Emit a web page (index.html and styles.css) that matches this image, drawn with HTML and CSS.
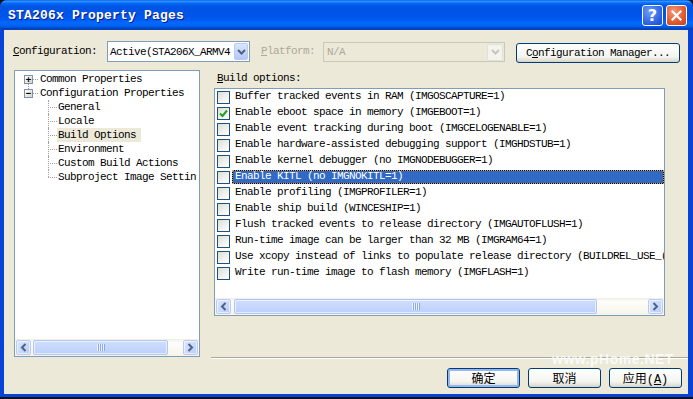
FILE: index.html
```html
<!DOCTYPE html>
<html lang="zh">
<head>
  <meta charset="UTF-8" />
  <title>STA206x Property Pages</title>
  <link rel="stylesheet" href="styles.css">
</head>
<body>
  <div class="window">
    <div class="titlebar">
      <span class="title">STA206x Property Pages</span>
      <div class="caption-btns">
        <span class="cap-btn help">?</span>
        <span class="cap-btn close">
          <svg width="11" height="11" viewBox="0 0 11 11"><path d="M1.5 1.5 L9.5 9.5 M9.5 1.5 L1.5 9.5" stroke="#fff" stroke-width="2.2" stroke-linecap="square"/></svg>
        </span>
      </div>
    </div>

    <div class="client">
      <div class="config-row">
        <span class="cfg-label"><u>C</u>onfiguration:</span>
        <div class="combo">
          <span class="combo-text">Active(STA206X_ARMV4</span>
          <span class="drop">
            <svg width="9" height="6" viewBox="0 0 9 6"><path d="M1 1 L4.5 4.5 L8 1" fill="none" stroke="#4d6185" stroke-width="2"/></svg>
          </span>
        </div>
        <span class="plat-label"><u>P</u>latform:</span>
        <div class="combo combo-off">
          <span class="combo-text">N/A</span>
          <span class="drop">
            <svg width="9" height="6" viewBox="0 0 9 6"><path d="M1 1 L4.5 4.5 L8 1" fill="none" stroke="#c9c7ba" stroke-width="2"/></svg>
          </span>
        </div>
        <button class="btn mgr-btn">C<u>o</u>nfiguration Manager...</button>
      </div>

      <div class="main">
        <div class="tree-panel">
          <div class="tree-body">
            <div class="node top"><span class="exp">+</span><span class="dots"></span><span class="txt">Common Properties</span></div>
            <div class="node top"><span class="exp open">&minus;</span><span class="dots"></span><span class="txt">Configuration Properties</span></div>
            <div class="node child"><span class="hline"></span><span class="txt">General</span></div>
            <div class="node child"><span class="hline"></span><span class="txt">Locale</span></div>
            <div class="node child"><span class="hline"></span><span class="txt sel">Build Options</span></div>
            <div class="node child"><span class="hline"></span><span class="txt">Environment</span></div>
            <div class="node child"><span class="hline"></span><span class="txt">Custom Build Actions</span></div>
            <div class="node child last"><span class="hline"></span><span class="txt">Subproject Image Settin</span></div>
          </div>
          <div class="hscroll">
            <span class="sb-btn"><svg width="7" height="9" viewBox="0 0 7 9"><path d="M5.5 1 L2 4.5 L5.5 8" fill="none" stroke="#4d6185" stroke-width="2"/></svg></span>
            <span class="thumb tree-thumb"><span class="grip"></span></span>
            <span class="sb-btn sb-right"><svg width="7" height="9" viewBox="0 0 7 9"><path d="M1.5 1 L5 4.5 L1.5 8" fill="none" stroke="#4d6185" stroke-width="2"/></svg></span>
          </div>
        </div>

        <div class="options">
          <div class="opt-label"><u>B</u>uild options:</div>
          <div class="listbox">
            <div class="rows">
              <div class="row"><span class="check"></span><span class="item">Buffer tracked events in RAM (IMGOSCAPTURE=1)</span></div>
              <div class="row"><span class="check checked"><svg width="9" height="9" viewBox="0 0 9 9"><path d="M1 4.5 L3.5 7 L8 1.5" fill="none" stroke="#21a121" stroke-width="2"/></svg></span><span class="item">Enable eboot space in memory (IMGEBOOT=1)</span></div>
              <div class="row"><span class="check"></span><span class="item">Enable event tracking during boot (IMGCELOGENABLE=1)</span></div>
              <div class="row"><span class="check"></span><span class="item">Enable hardware-assisted debugging support (IMGHDSTUB=1)</span></div>
              <div class="row"><span class="check"></span><span class="item">Enable kernel debugger (no IMGNODEBUGGER=1)</span></div>
              <div class="row"><span class="check"></span><span class="item selected">Enable KITL (no IMGNOKITL=1)</span></div>
              <div class="row"><span class="check"></span><span class="item">Enable profiling (IMGPROFILER=1)</span></div>
              <div class="row"><span class="check"></span><span class="item">Enable ship build (WINCESHIP=1)</span></div>
              <div class="row"><span class="check"></span><span class="item">Flush tracked events to release directory (IMGAUTOFLUSH=1)</span></div>
              <div class="row"><span class="check"></span><span class="item">Run-time image can be larger than 32 MB (IMGRAM64=1)</span></div>
              <div class="row"><span class="check"></span><span class="item">Use xcopy instead of links to populate release directory (BUILDREL_USE_(</span></div>
              <div class="row"><span class="check"></span><span class="item">Write run-time image to flash memory (IMGFLASH=1)</span></div>
            </div>
            <div class="hscroll">
              <span class="sb-btn"><svg width="7" height="9" viewBox="0 0 7 9"><path d="M5.5 1 L2 4.5 L5.5 8" fill="none" stroke="#4d6185" stroke-width="2"/></svg></span>
              <span class="thumb list-thumb"><span class="grip"></span></span>
              <span class="sb-btn sb-right"><svg width="7" height="9" viewBox="0 0 7 9"><path d="M1.5 1 L5 4.5 L1.5 8" fill="none" stroke="#4d6185" stroke-width="2"/></svg></span>
            </div>
          </div>
        </div>
      </div>

      <div class="separator"></div>

      <div class="footer">
        <button class="btn dlg-btn default">确定</button>
        <button class="btn dlg-btn">取消</button>
        <button class="btn dlg-btn">应用(<u>A</u>)</button>
      </div>

      <div class="watermark">www.pHome.NET</div>
    </div>
  </div>
</body>
</html>
```

FILE: styles.css
```css
* { box-sizing: border-box; }
body {
  margin: 0;
  background: #12121c;
  font-family: "Liberation Mono", monospace;
  font-size: 11px;
  letter-spacing: -0.6px;
  color: #000;
}
u { text-decoration: underline; }

.window {
  width: 693px;
  height: 397px;
  display: flex;
  flex-direction: column;
  background: #0842d6;
  border-radius: 7px 7px 0 0;
  overflow: hidden;
}
.titlebar {
  height: 30px;
  flex: none;
  display: flex;
  align-items: center;
  padding: 0 6px 0 8px;
  background: linear-gradient(to bottom, #0058ee 0%, #3593ff 4%, #288eff 6%, #127dff 8%, #036ffc 10%, #0262ee 14%, #0057e5 20%, #0054e3 24%, #0055eb 56%, #005bf5 66%, #026afe 76%, #0062ef 86%, #0052d6 92%, #0040ab 96%, #0842d6 100%);
}
.title {
  flex: 1;
  color: #fff;
  font-weight: bold;
  font-size: 13px;
  letter-spacing: 0.2px;
  text-shadow: 1px 1px 0 #0a1a8a;
  margin-top: 1px;
}
.caption-btns { display: flex; gap: 3px; }
.cap-btn {
  width: 21px;
  height: 21px;
  border: 1px solid #fff;
  border-radius: 3px;
  display: flex;
  align-items: center;
  justify-content: center;
  color: #fff;
}
.help {
  background: radial-gradient(circle at 35% 30%, #6c9cf8, #2a5ee0 70%, #1b47c4);
  font-family: "DejaVu Sans", sans-serif;
  font-weight: bold;
  font-size: 16px;
  letter-spacing: 0;
}
.close {
  background: radial-gradient(circle at 35% 30%, #f29a78, #e0582e 60%, #c7411a);
}

.client {
  flex: 1;
  margin: 0 5px 3px 4px;
  background: #ece9d8;
  display: flex;
  flex-direction: column;
  position: relative;
  overflow: hidden;
}

/* configuration row */
.config-row {
  display: flex;
  align-items: flex-start;
  height: 21px;
  margin-top: 11px;
  padding-left: 9px;
}
.cfg-label { width: 94px; line-height: 21px; }
.plat-label { width: 62px; margin-left: 11px; line-height: 21px; color: #aca899; }
.combo {
  width: 143px;
  height: 21px;
  border: 1px solid #7f9db9;
  background: #fff;
  display: flex;
  align-items: center;
  overflow: hidden;
}
.combo-text { flex: 1; padding-left: 2px; white-space: nowrap; overflow: hidden; }
.drop {
  flex: none;
  width: 14px;
  height: 17px;
  margin-right: 1px;
  border: 1px solid #b9c9ef;
  border-radius: 2px;
  background: linear-gradient(#dbe6fd, #b4c8f6);
  display: flex;
  align-items: center;
  justify-content: center;
}
.combo-off {
  width: 182px;
  height: 20px;
  margin-top: 1px;
  border-color: #c9c7ba;
  background: #ece9d8;
  color: #aca899;
}
.combo-off .combo-text { padding-left: 3px; }
.combo-off .drop {
  width: 16px;
  height: 17px;
  background: #f4f3ee;
  border-color: #e3e1d6;
}

.btn {
  font-family: "Liberation Mono", monospace;
  font-size: 11px;
  letter-spacing: -0.6px;
  color: #000;
  border: 1px solid #003c74;
  border-radius: 3px;
  background: linear-gradient(#ffffff, #f4f4f0 70%, #e3e0d6 90%, #d6d0c5);
  padding: 0;
  cursor: default;
}
.mgr-btn { width: 164px; height: 20px; margin-left: 11px; margin-top: 2px; }

/* tree + list */
.main {
  display: flex;
  margin-top: 8px;
  padding-left: 10px;
  height: 287px;
}
.tree-panel {
  width: 186px;
  height: 287px;
  border: 1px solid #7f9db9;
  background: #fff;
  display: flex;
  flex-direction: column;
}
.tree-body { flex: 1; padding-top: 1px; overflow: hidden; }
.node {
  position: relative;
  height: 14px;
  line-height: 14px;
  display: flex;
  white-space: nowrap;
}
.node.top { padding-left: 9px; }
.exp {
  position: relative;
  flex: none;
  width: 9px;
  height: 9px;
  margin-top: 3px;
  border: 1px solid #7b92b5;
  background: linear-gradient(135deg, #fff, #d8d4c8);
  font-family: "DejaVu Sans Mono", monospace;
  font-size: 9px;
  line-height: 6px;
  letter-spacing: 0;
  text-align: center;
  font-weight: bold;
}
.exp.open::before {
  content: "";
  position: absolute;
  left: 3px;
  top: -6px;
  height: 5px;
  border-left: 1px dotted #a0a0a0;
}
.dots {
  flex: none;
  width: 5px;
  margin: 7px 1px 0 0;
  height: 1px;
  border-top: 1px dotted #a0a0a0;
}
.node.child { padding-left: 33px; }
.node.child::before {
  content: "";
  position: absolute;
  left: 33px;
  top: 0;
  bottom: 0;
  border-left: 1px dotted #a0a0a0;
}
.node.child.last::before { bottom: 7px; }
.hline {
  flex: none;
  width: 9px;
  height: 1px;
  margin-top: 7px;
  border-top: 1px dotted #a0a0a0;
}
.node .txt { flex: none; padding: 0 5px 0 1px; }
.node .txt.sel { background: #ece9d8; }

.hscroll {
  flex: none;
  height: 17px;
  padding: 1px;
  display: flex;
  background: linear-gradient(#eeede5, #fefefb 20%, #f5f4ea);
}
.sb-btn {
  flex: none;
  width: 15px;
  height: 15px;
  border: 1px solid #b9cbf3;
  border-radius: 2px;
  background: linear-gradient(135deg, #dbe6fe, #b8ccf8);
  display: flex;
  align-items: center;
  justify-content: center;
  box-shadow: inset 0 0 0 1px rgba(255,255,255,0.6);
}
.sb-right { margin-left: auto; }
.thumb {
  flex: none;
  height: 15px;
  border: 1px solid #b0c6f3;
  border-radius: 2px;
  background: linear-gradient(#d0defd, #bcd0fb);
  box-shadow: inset 0 0 0 1px rgba(255,255,255,0.6);
  display: flex;
  align-items: center;
  justify-content: center;
}
.grip {
  width: 8px;
  height: 7px;
  background: repeating-linear-gradient(to right, #eef3ff 0 1px, #8aa9ea 1px 2px);
}
.tree-thumb { width: 135px; margin-left: 2px; }
.list-thumb { width: 363px; margin-left: 3px; }

.options {
  width: 451px;
  margin-left: 14px;
  display: flex;
  flex-direction: column;
}
.opt-label {
  height: 18px;
  line-height: 16px;
  padding-left: 3px;
}
.listbox {
  height: 228px;
  border: 1px solid #7f9db9;
  background: #fff;
  display: flex;
  flex-direction: column;
}
.rows { flex: 1; overflow: hidden; }
.row {
  height: 16px;
  display: flex;
  align-items: flex-start;
  white-space: nowrap;
}
.check {
  flex: none;
  width: 13px;
  height: 13px;
  margin: 2px 2px 0 2px;
  border: 1px solid #1c5180;
  background: linear-gradient(135deg, #dcdcd7, #f6f6f3 70%, #fff);
  display: flex;
  align-items: center;
  justify-content: center;
}
.item {
  flex: 1;
  height: 14px;
  margin-top: 1px;
  line-height: 13px;
  padding: 0 3px;
  overflow: hidden;
}
.item.selected {
  background: #316ac5;
  color: #fff;
  border: 1px solid #000;
  outline: 1px dotted #e6a33c;
  outline-offset: -1px;
  padding-left: 2px;
  line-height: 11px;
}

.separator {
  margin-left: 207px;
  height: 2px;
  border-top: 1px solid #aca899;
  border-bottom: 1px solid #fff;
}
.footer {
  display: flex;
  justify-content: flex-end;
  gap: 8px;
  margin-top: 9px;
  padding-right: 6px;
}
.dlg-btn {
  width: 73px;
  height: 20px;
  font-family: "Liberation Mono", "Noto Sans CJK SC", monospace;
  font-size: 12px;
  letter-spacing: 0;
}
.dlg-btn.default { box-shadow: inset 0 0 0 2px #97b6f0; }

.watermark {
  position: absolute;
  left: 548px;
  top: 321px;
  font-family: "Liberation Sans", sans-serif;
  font-weight: bold;
  font-size: 14px;
  letter-spacing: 0.5px;
  line-height: 16px;
  color: rgba(255,255,255,0.8);
  pointer-events: none;
}
```
